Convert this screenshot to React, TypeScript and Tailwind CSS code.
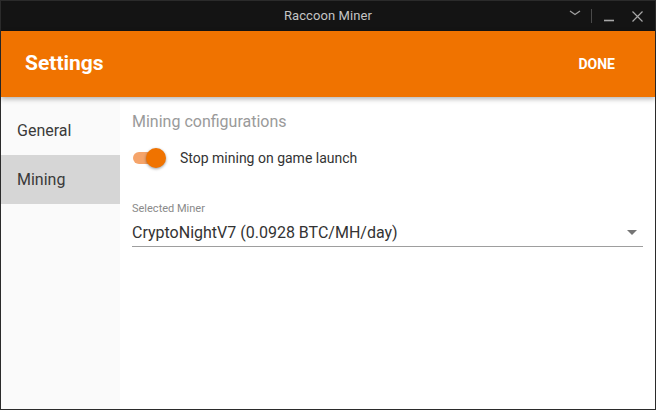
import React from "react";

export default function App() {
  return (
    <div
      className="w-[656px] h-[410px] bg-[#2b2b2b] p-[1px] flex flex-col overflow-hidden"
      style={{ fontFamily: "Roboto, 'Liberation Sans', sans-serif" }}
    >
      {/* Title bar */}
      <div className="h-[30px] bg-[#141414] relative flex items-center justify-center shrink-0">
        <span className="text-[13px] text-[#c4c4c4] tracking-[0.1px]" style={{ fontFamily: "Roboto, 'DejaVu Sans Condensed', sans-serif" }}>
          Raccoon Miner
        </span>
        <div className="absolute right-0 top-0 h-[30px] flex items-center">
          <svg width="14" height="8" viewBox="0 0 14 8" className="mr-[9px] -mt-[6px]">
            <path d="M2 2 L7 5.5 L12 2" fill="none" stroke="#a0a0a0" strokeWidth="1.3" />
          </svg>
          <div className="w-[1px] h-[14px] bg-[#4a4a4a] mr-[11px]" />
          <svg width="12" height="12" viewBox="0 0 12 12" className="mr-[16px]">
            <path d="M1 10.5 H11" stroke="#a8a8a8" strokeWidth="1.6" />
          </svg>
          <svg width="13" height="13" viewBox="0 0 13 13" className="mr-[11px]">
            <path d="M1.5 1.5 L11.5 11.5 M11.5 1.5 L1.5 11.5" stroke="#a8a8a8" strokeWidth="1.2" />
          </svg>
        </div>
      </div>

      {/* Header */}
      <div className="h-[66px] bg-[#f07300] flex items-center justify-between pl-[24px] pr-[40px] shrink-0 relative z-10 shadow-[0_2px_5px_rgba(0,0,0,0.3)]">
        <span className="text-white text-[21px] font-bold">Settings</span>
        <span className="text-white text-[14px] font-bold">DONE</span>
      </div>

      {/* Body */}
      <div className="flex flex-1 bg-white min-h-0">
        <div className="w-[119px] bg-[#fafafa] pt-[9px] flex flex-col shrink-0">
          <div className="h-[49px] flex items-center pl-[16px] text-[16px] text-[#3a3a3a]">General</div>
          <div className="h-[49px] flex items-center pl-[16px] text-[16px] text-[#3a3a3a] bg-[#d6d6d6]">Mining</div>
        </div>
        <div className="flex-1 pl-[12px] pr-[12px] pt-[15px] flex flex-col">
          <div className="text-[16px] text-[#9a9a9a] leading-[20px]">Mining configurations</div>
          <div className="flex items-center mt-[16px] h-[20px]">
            <div className="relative w-[34px] h-[20px] flex items-center">
              <div className="w-[28px] h-[12px] rounded-full bg-[#f5a46a] ml-[1px]" />
              <div className="absolute right-[0px] top-0 w-[20px] h-[20px] rounded-full bg-[#f07300] shadow-[0_1px_3px_rgba(0,0,0,0.4)]" />
            </div>
            <span className="ml-[14px] text-[14px] text-[#333]">Stop mining on game launch</span>
          </div>
          <div className="mt-[34px] text-[11px] text-[#8a8a8a] leading-[14px]">Selected Miner</div>
          <div className="mt-[5px] h-[26px] flex items-center justify-between border-b border-[#9e9e9e] pb-[2px]">
            <span className="text-[16px] text-[#333]">CryptoNightV7 (0.0928 BTC/MH/day)</span>
            <svg width="10" height="5" viewBox="0 0 10 5" className="mr-[6px]">
              <path d="M0 0 H10 L5 5 Z" fill="#757575" />
            </svg>
          </div>
        </div>
      </div>
    </div>
  );
}
